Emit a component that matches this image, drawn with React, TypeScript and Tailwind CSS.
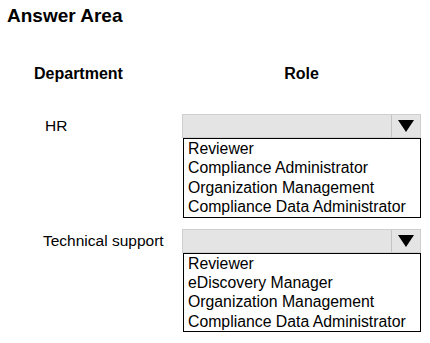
const departments = [
  {
    name: "HR",
    pad: "pl-[45px]",
    roles: ["Reviewer", "Compliance Administrator", "Organization Management", "Compliance Data Administrator"],
  },
  {
    name: "Technical support",
    pad: "pl-[43px]",
    roles: ["Reviewer", "eDiscovery Manager", "Organization Management", "Compliance Data Administrator"],
  },
]

function Dropdown({ roles }: { roles: string[] }) {
  return (
    <div className="w-[239px]">
      <div className="flex h-[24px] border border-[#cfcfcf] bg-[#e4e4e4]">
        <div className="flex-1" />
        <div className="flex w-[29px] items-center justify-center border-l border-[#c4c4c4]">
          <svg width="16" height="12" viewBox="0 0 16 12">
            <polygon points="0,0 16,0 8,12" fill="#000" />
          </svg>
        </div>
      </div>
      <div className="ml-[1px] border border-black bg-white px-[4px] text-[15.8px] leading-[19.4px] text-black">
        {roles.map((r) => (
          <div key={r} className="whitespace-nowrap">
            {r}
          </div>
        ))}
      </div>
    </div>
  )
}

export default function App() {
  return (
    <div
      className="h-[343px] w-[430px] bg-white text-black"
      style={{ fontFamily: '"Liberation Sans", Arial, sans-serif' }}
    >
      <div className="pl-[7px] pt-[6px] text-[19px] font-bold leading-[19px]">Answer Area</div>

      <div className="mt-[39px] flex text-[16px] font-bold leading-[19px]">
        <div className="w-[182px] pl-[34px]">Department</div>
        <div className="w-[239px] text-center">Role</div>
      </div>

      <div className="mt-[31px] flex flex-col gap-[11px]">
        {departments.map((d) => (
          <div key={d.name} className="flex">
            <div className={`w-[182px] pt-[2px] text-[15.5px] leading-[19px] ${d.pad}`}>{d.name}</div>
            <Dropdown roles={d.roles} />
          </div>
        ))}
      </div>
    </div>
  )
}
